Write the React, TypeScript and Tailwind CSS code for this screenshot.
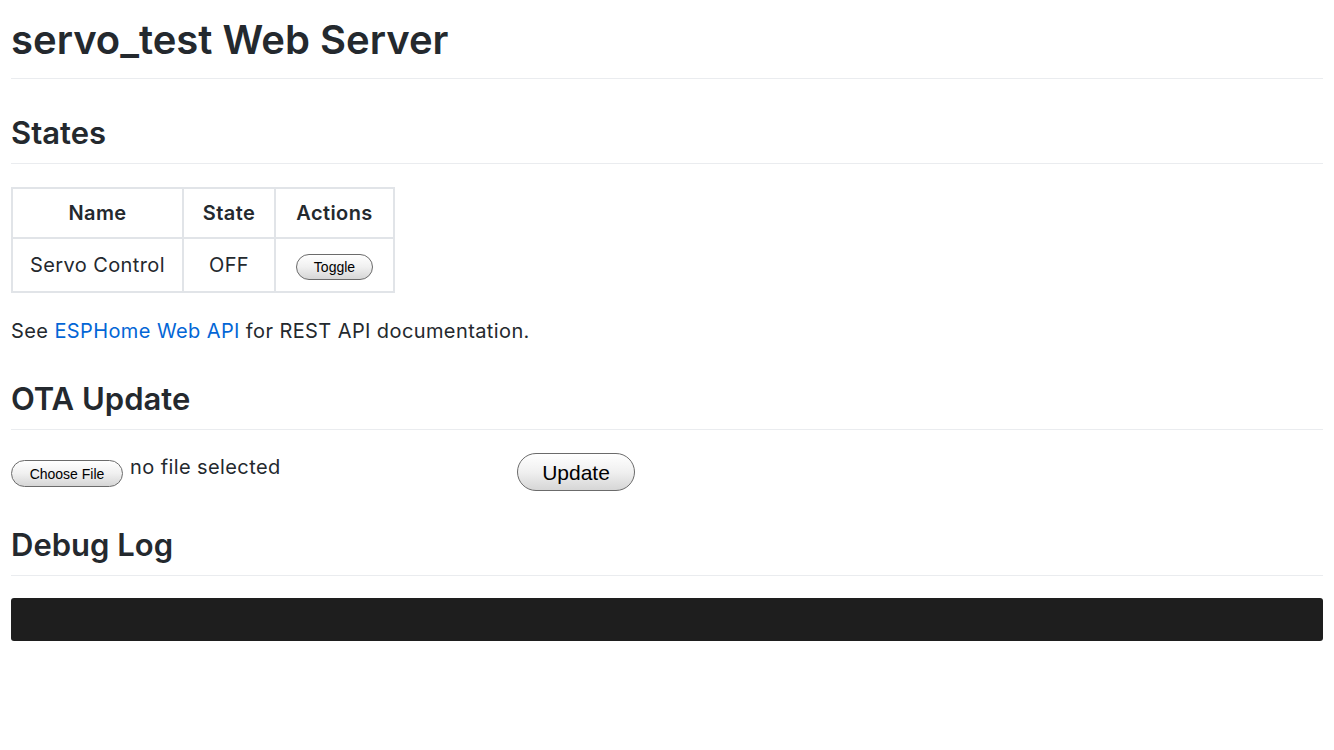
import React from "react";

const btn =
  "rounded-full border border-[#6b6b6b] bg-gradient-to-b from-[#ffffff] via-[#f0f0f0] to-[#d6d6d6] text-black [font-family:'Liberation_Sans',Arial,sans-serif] leading-none tracking-normal";

const h2 =
  "pb-[11px] border-b border-[#eaecef] text-[31px] font-semibold leading-[38px] tracking-normal";

export default function App() {
  return (
    <div className="min-h-[750px] bg-white px-[11px] text-[#24292e] [font-family:Inter,'Noto_Sans',sans-serif] text-[20px] tracking-[0.4px]">
      <h1 className="pt-[15px] pb-[13px] border-b border-[#eaecef] text-[40px] font-semibold leading-[50px] tracking-normal">
        servo_test Web Server
      </h1>

      <h2 className={`mt-[35px] ${h2}`}>States</h2>

      <table className="mt-[23px] border-collapse">
        <thead>
          <tr>
            <th className="h-[50px] w-[171px] border-2 border-[#e1e4e8] px-[12px] font-semibold text-center">Name</th>
            <th className="h-[50px] w-[92px] border-2 border-[#e1e4e8] px-[12px] font-semibold text-center">State</th>
            <th className="h-[50px] w-[119px] border-2 border-[#e1e4e8] px-[12px] font-semibold text-center">Actions</th>
          </tr>
        </thead>
        <tbody>
          <tr>
            <td className="h-[54px] border-2 border-[#e1e4e8] px-[12px] text-center">Servo Control</td>
            <td className="h-[54px] border-2 border-[#e1e4e8] px-[12px] text-center">OFF</td>
            <td className="h-[54px] border-2 border-[#e1e4e8] px-[12px] text-center">
              <span className={`${btn} inline-flex h-[26px] w-[77px] items-center justify-center text-[14px] align-middle`}>
                Toggle
              </span>
            </td>
          </tr>
        </tbody>
      </table>

      <p className="mt-[23px] leading-[30px]">
        See <a className="text-[#0366d6]">ESPHome Web API</a> for REST API documentation.
      </p>

      <h2 className={`mt-[34px] ${h2}`}>OTA Update</h2>

      <div className="mt-[23px] flex items-start">
        <div className="flex w-[506px] items-start">
          <span className={`${btn} mt-[7px] inline-flex h-[27px] w-[112px] items-center justify-center text-[14px]`}>
            Choose File
          </span>
          <span className="ml-[7px] leading-[28px]">no file selected</span>
        </div>
        <span className={`${btn} inline-flex h-[38px] w-[118px] items-center justify-center text-[21px]`}>
          Update
        </span>
      </div>

      <h2 className={`mt-[35px] ${h2}`}>Debug Log</h2>

      <div className="mt-[22px] h-[43px] rounded-[3px] bg-[#1e1e1e]" />
    </div>
  );
}
